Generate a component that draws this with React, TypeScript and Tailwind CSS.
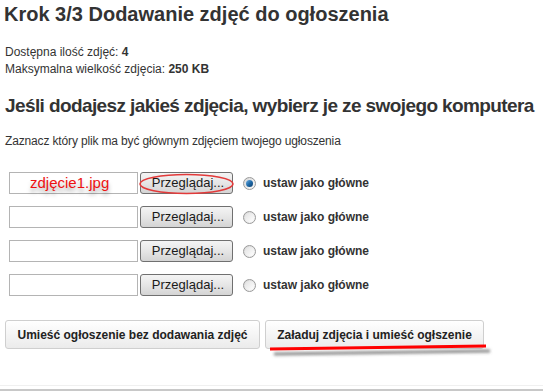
import React from "react";

function Radio({ checked }: { checked?: boolean }) {
  return (
    <span className="w-[13px] h-[13px] rounded-full border border-[#9a9a9a] bg-gradient-to-br from-[#d8d8d8] to-[#fafafa] flex items-center justify-center shrink-0">
      {checked ? (
        <span className="w-[7px] h-[7px] rounded-full bg-gradient-to-br from-[#6fb3e8] via-[#1f6aa8] to-[#0d3f6e]" />
      ) : (
        <span className="w-[9px] h-[9px] rounded-full bg-gradient-to-br from-[#e2e2e2] to-[#ffffff]" />
      )}
    </span>
  );
}

function Row({ first }: { first?: boolean }) {
  return (
    <div className="flex items-center h-[22px]">
      <div className="ml-[9px] w-[129px] h-[22px] border border-[#b4b4b4] bg-white flex items-center">
        {first && (
          <span className="ml-[20px] text-[15px] text-[#ee1111] [text-shadow:0_4px_4px_rgba(0,0,0,0.35)]">
            zdjęcie1.jpg
          </span>
        )}
      </div>
      <div className="relative ml-[2px]">
        <button className="w-[93px] h-[22px] border border-[#707070] rounded-[3px] bg-gradient-to-b from-[#f4f4f4] via-[#e6e6e6] to-[#d4d4d4] text-[13px] text-[#1a1a1a] flex items-center justify-center pl-[3px]">
          Przeglądaj...
        </button>
        {first && (
          <svg className="absolute left-[-2px] top-[1px] pointer-events-none" width="97" height="22" viewBox="0 0 97 22">
            <ellipse cx="48.5" cy="11" rx="46.5" ry="9.5" fill="none" stroke="#e23a3a" strokeWidth="1.6" />
          </svg>
        )}
      </div>
      <div className="ml-[10px]">
        <Radio checked={first} />
      </div>
      <span className="ml-[7px] text-[12px] font-bold text-[#333]">ustaw jako główne</span>
    </div>
  );
}

export default function App() {
  return (
    <div className="w-[543px] h-[391px] bg-white relative overflow-hidden font-['Liberation_Sans',Arial,sans-serif] text-[#333] flex flex-col">
      <h1 className="mt-[2px] ml-[4px] text-[20px] leading-[24px] font-bold">
        Krok 3/3 Dodawanie zdjęć do ogłoszenia
      </h1>
      <div className="mt-[18px] ml-[5px] text-[12px] leading-[17px]">
        <div>
          Dostępna ilość zdjęć: <b>4</b>
        </div>
        <div>
          Maksymalna wielkość zdjęcia: <b>250 KB</b>
        </div>
      </div>
      <h2 className="mt-[16px] ml-[5px] text-[19px] leading-[24px] font-bold whitespace-nowrap tracking-[-0.6px]">
        Jeśli dodajesz jakieś zdjęcia, wybierz je ze swojego komputera
      </h2>
      <div className="mt-[15px] ml-[5px] text-[12px] leading-[17px] tracking-[-0.15px]">
        Zaznacz który plik ma być głównym zdjęciem twojego ugłoszenia
      </div>
      <div className="mt-[22px] flex flex-col gap-[12px]">
        <Row first />
        <Row />
        <Row />
        <Row />
      </div>
      <div className="mt-[24px] ml-[5px] flex gap-[5px] relative">
        <button className="w-[255px] h-[29px] border border-[#cfcfcf] rounded-[3px] bg-gradient-to-b from-[#ffffff] to-[#ebebeb] text-[12px] font-bold text-[#222]">
          Umieść ogłoszenie bez dodawania zdjęć
        </button>
        <button className="w-[219px] h-[29px] border border-[#cfcfcf] rounded-[3px] bg-gradient-to-b from-[#ffffff] to-[#ebebeb] text-[12px] font-bold text-[#222]">
          Załaduj zdjęcia i umieść ogłszenie
        </button>
        <svg className="absolute left-[257px] top-[21px] pointer-events-none" width="240" height="20" viewBox="0 0 240 20">
          <defs>
            <filter id="blur" x="-10%" y="-200%" width="120%" height="500%">
              <feGaussianBlur stdDeviation="1.6" />
            </filter>
          </defs>
          <path d="M12 13 L228 10" stroke="#555" strokeOpacity="0.7" strokeWidth="3" filter="url(#blur)" fill="none" />
          <path d="M8 8 L224 5" stroke="#ff0000" strokeWidth="3" fill="none" />
        </svg>
      </div>
      <div className="mt-auto">
        <div className="h-px bg-[#f0f0f0]" />
        <div className="h-[3px] bg-white" />
        <div className="h-[2px] bg-[#c8c8c8]" />
      </div>
    </div>
  );
}
